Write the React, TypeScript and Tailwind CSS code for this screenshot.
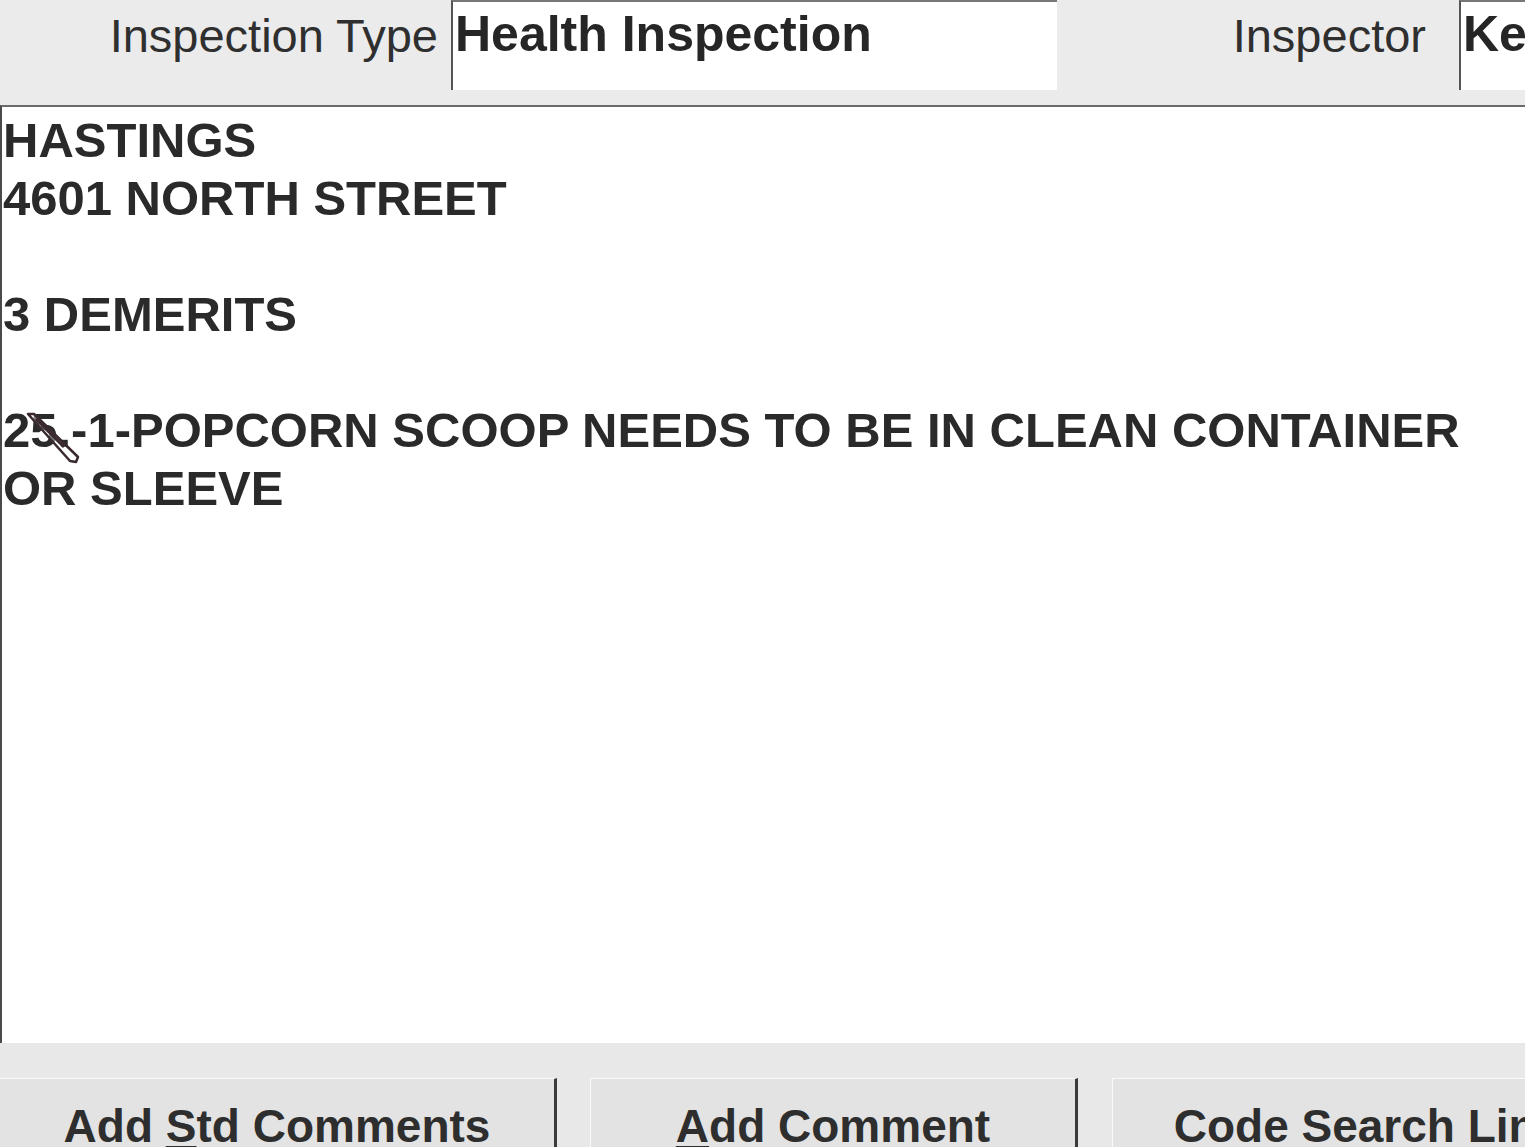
import React from "react";

const lines = [
    "HASTINGS",
    "4601 NORTH STREET",
    "",
    "3 DEMERITS",
    "",
];

const ActionButton = ({
    label,
    hotkey,
    rest,
    className,
}: {
    label?: string;
    hotkey: string;
    rest: string;
    className: string;
}) => {
    return (
        <div
            className={`h-[92px] shrink-0 bg-[#e3e3e3] border-t border-l border-t-[#fafafa] border-l-[#fafafa] border-r-[3px] border-r-[#3a3a3a] flex justify-center pt-[24px] ${className}`}
        >
            <span className="text-[46px] leading-none font-bold text-[#2e2e2e] whitespace-nowrap">
                {label}
                <span className="underline decoration-[3px] underline-offset-[4px]">
                    {hotkey}
                </span>
                {rest}
            </span>
        </div>
    );
};

const App = () => {
    return (
        <div
            className="w-[1525px] h-[1147px] overflow-hidden bg-[#e8e8e8] flex flex-col"
            style={{ fontFamily: '"Liberation Sans", Arial, sans-serif' }}
        >
            {/* header fields */}
            <div className="h-[105px] shrink-0 flex items-start bg-[#ebebeb]">
                <div className="w-[438px] shrink-0 text-right pt-[12px]">
                    <span className="text-[47px] leading-none text-[#2f2f2f]">
                        Inspection Type
                    </span>
                </div>
                <div className="ml-[13px] w-[606px] h-[90px] shrink-0 bg-white border-l-2 border-t-2 border-l-[#555] border-t-[#777] pl-[2px] pt-[7px]">
                    <span className="text-[50px] leading-none font-bold text-[#262626]">
                        Health Inspection
                    </span>
                </div>
                <div className="flex-1 text-right pt-[12px] pr-[33px]">
                    <span className="text-[47px] leading-none text-[#2f2f2f]">
                        Inspector
                    </span>
                </div>
                <div className="w-[66px] h-[90px] shrink-0 bg-white border-l-2 border-t-2 border-l-[#555] border-t-[#777] pl-[2px] pt-[7px] overflow-hidden">
                    <span className="text-[50px] leading-none font-bold text-[#262626] whitespace-nowrap">
                        Kevin
                    </span>
                </div>
            </div>

            {/* comments box */}
            <div className="relative h-[938px] shrink-0 bg-white border-t-2 border-l-2 border-t-[#6a6a6a] border-l-[#4a4a4a] pl-px pt-[4px]">
                <div className="text-[49px] leading-[58px] font-bold text-[#2a2a2a] w-[1480px]">
                    {lines.map((line, i) => (
                        <div key={i} className="h-[58px]">
                            {line}
                        </div>
                    ))}
                    <div>
                        25.-1-POPCORN SCOOP NEEDS TO BE IN CLEAN CONTAINER OR
                        SLEEVE
                    </div>
                </div>
                {/* mouse pointer over the text */}
                <svg
                    className="absolute left-[22px] top-[304px]"
                    width="58"
                    height="54"
                    viewBox="0 0 58 54"
                >
                    <path
                        d="M4 3 L10 3 L54 46 L52 51 L46 50 Z"
                        fill="#ffffff"
                        fillOpacity="0.4"
                        stroke="#3a2a30"
                        strokeWidth="2.5"
                        strokeLinejoin="round"
                    />
                    <path
                        d="M12 8 L40 36"
                        stroke="#3a2a30"
                        strokeWidth="3"
                    />
                </svg>
            </div>

            {/* action buttons */}
            <div className="flex pt-[35px]">
                <ActionButton
                    label="Add "
                    hotkey="S"
                    rest="td Comments"
                    className="w-[557px] border-l-0"
                />
                <ActionButton
                    hotkey="A"
                    rest="dd Comment"
                    className="ml-[33px] w-[488px]"
                />
                <ActionButton
                    hotkey=""
                    rest="Code Search Link"
                    className="ml-[34px] w-[514px]"
                />
            </div>
        </div>
    );
};

export default App;
